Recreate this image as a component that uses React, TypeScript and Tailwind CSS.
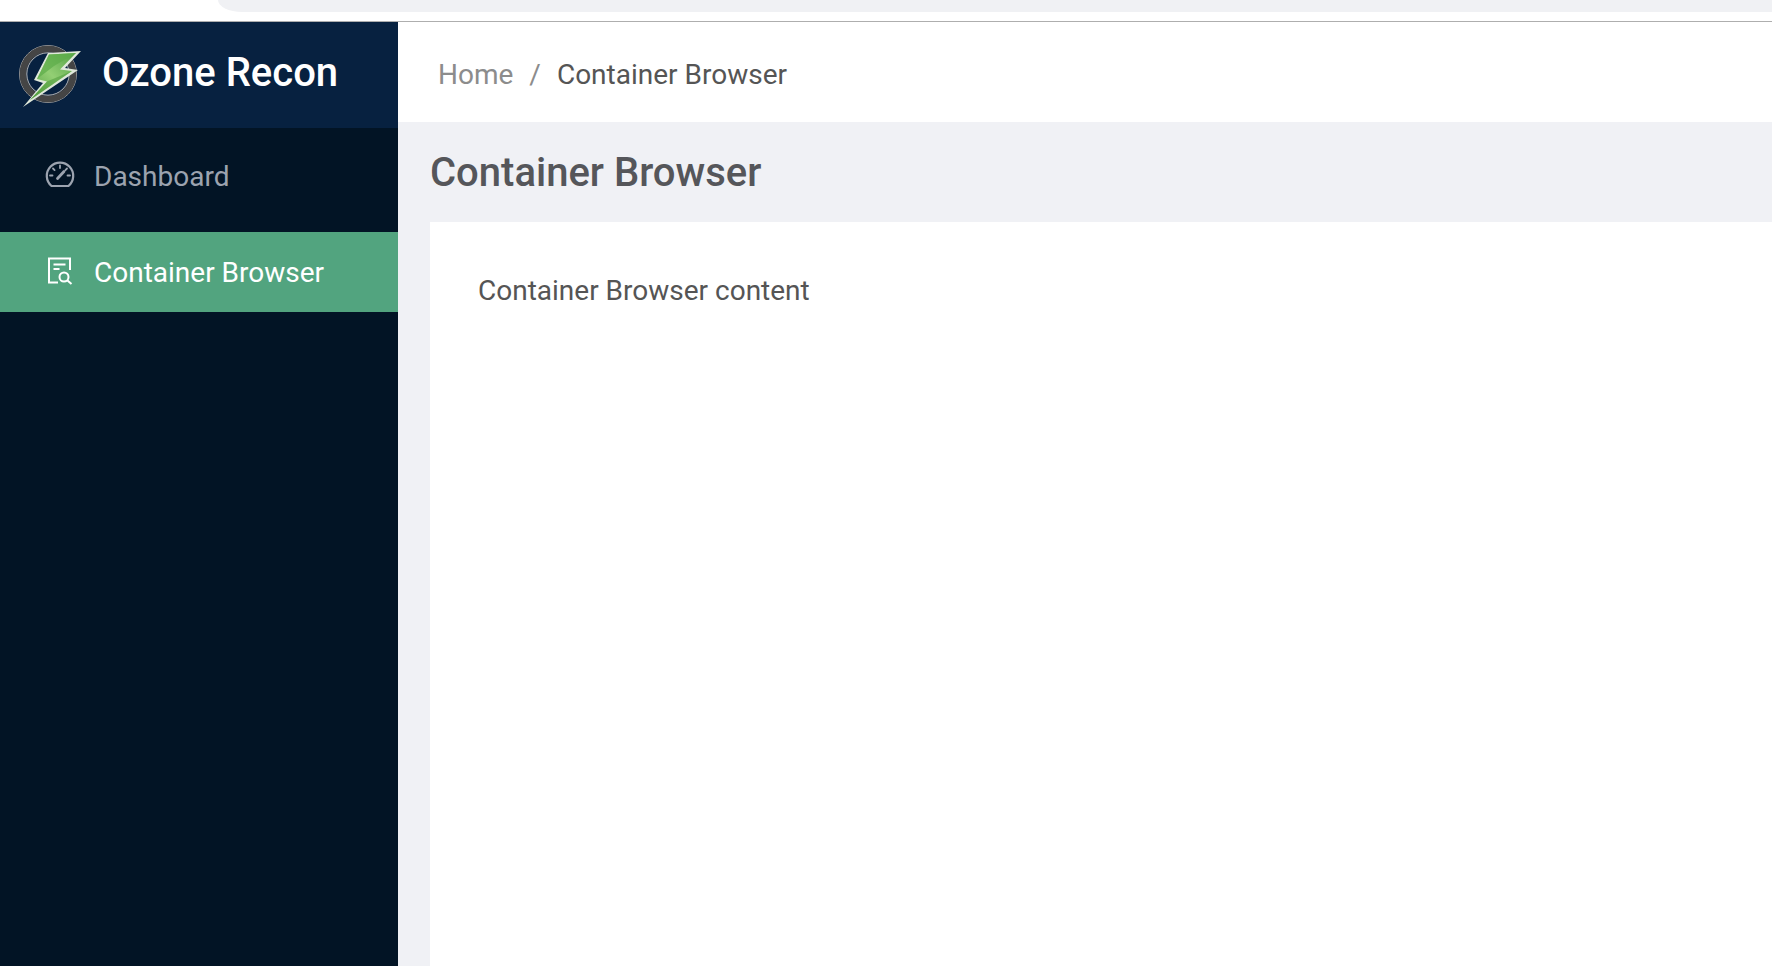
import React from 'react';

const font = { fontFamily: 'Roboto, sans-serif' };

function Logo() {
  return (
    <svg width="66" height="66" viewBox="0 0 66 66" className="shrink-0">
      <defs>
        <linearGradient id="bolt" x1="0" y1="1" x2="1" y2="0">
          <stop offset="0" stopColor="#4f9a3c" />
          <stop offset="0.5" stopColor="#93cf74" />
          <stop offset="1" stopColor="#4f9f42" />
        </linearGradient>
      </defs>
      <circle cx="32" cy="32" r="28.5" fill="none" stroke="#9c9c9c" strokeWidth="1" />
      <circle cx="32" cy="32" r="25" fill="none" stroke="#454545" strokeWidth="6.5" />
      <circle cx="32" cy="32" r="21.2" fill="none" stroke="#b5b5b5" strokeWidth="1" />
      <path d="M32 11 L65 9 L49 26 L62 28 L7 65 L27 41 L18 38 Z" fill="#dfe8da" />
      <path d="M33 12.5 L60 11 L44 27.5 L56 29 L14 58 L31 39.5 L21 37 Z" fill="url(#bolt)" />
      <path d="M33 12.5 L60 11 L38 24 L21 37 Z" fill="#5fae4b" opacity="0.75" />
      <path d="M31 39.5 L56 29 L14 58 Z" fill="#4f9a3c" opacity="0.55" />
    </svg>
  );
}

function GaugeIcon() {
  return (
    <svg width="30" height="28" viewBox="0 0 30 28" fill="none" stroke="#9ca3af" strokeWidth="2.2" strokeLinecap="round" className="-mt-[6px]">
      <path d="M6.5 26 A13.2 13.2 0 1 1 23.5 26 Z" strokeLinejoin="round" />
      <path d="M15 5.5v2.5M8 8.5l1.6 1.6M22 8.5l-1.6 1.6M5 15.5H7.5M25 15.5H22.5" strokeWidth="1.8" />
      <path d="M12.5 18.5L19 11.5" strokeWidth="2.8" />
    </svg>
  );
}

function FileSearchIcon() {
  return (
    <svg width="26" height="28" viewBox="0 0 26 28" fill="none" stroke="#ffffff" strokeWidth="2" className="-mt-[4px]">
      <path d="M11 25.5H2V1.5H23V13" />
      <path d="M6.5 7.5H18.5M6.5 12H12.5" />
      <circle cx="17" cy="20" r="4.5" />
      <path d="M20.5 23.5L24.5 27" />
    </svg>
  );
}

export default function App() {
  return (
    <div className="h-[966px] w-full overflow-hidden bg-white flex flex-col" style={font}>
      {/* browser chrome remnant */}
      <div className="h-[21px] shrink-0 border-b border-[#aeaeae] box-content">
        <div className="ml-[218px] h-3 bg-[#f0f1f4] rounded-bl-[24px_12px]" />
      </div>

      <div className="flex flex-1 min-h-0">
        <aside className="w-[398px] shrink-0 bg-[#021425] flex flex-col">
          <div className="h-[106px] bg-[#072140] flex items-center pl-[16px] gap-[20px]">
            <Logo />
            <span className="text-white text-[40px] font-medium leading-none -mt-[4px]">Ozone Recon</span>
          </div>
          <div className="h-[104px] flex items-center pb-[6px] pl-[45px] gap-[20px] text-[#9ca3af] text-[28px]">
            <GaugeIcon />
            <span className="-ml-[1px]">Dashboard</span>
          </div>
          <div className="h-[80px] bg-[#52a47f] flex items-center pt-[2px] pl-[47px] gap-[21px] text-white text-[28px]">
            <FileSearchIcon />
            <span>Container Browser</span>
          </div>
        </aside>

        <main className="flex-1 min-w-0 bg-[#f0f1f5] flex flex-col">
          <div className="h-[100px] bg-white flex items-center pt-[5px] pl-[40px] text-[28px] shrink-0">
            <span className="text-[#8c8c8c]">Home</span>
            <span className="text-[#8c8c8c] mx-[16px]">/</span>
            <span className="text-[#555555]">Container Browser</span>
          </div>
          <div className="h-[100px] flex items-center pt-[2px] pl-[32px] shrink-0">
            <h1 className="text-[40px] font-medium text-[#55565a]">Container Browser</h1>
          </div>
          <div className="flex-1 ml-[32px] bg-white pt-[48px] pl-[48px] text-[28px] text-[#555555]">
            Container Browser content
          </div>
        </main>
      </div>
    </div>
  );
}
